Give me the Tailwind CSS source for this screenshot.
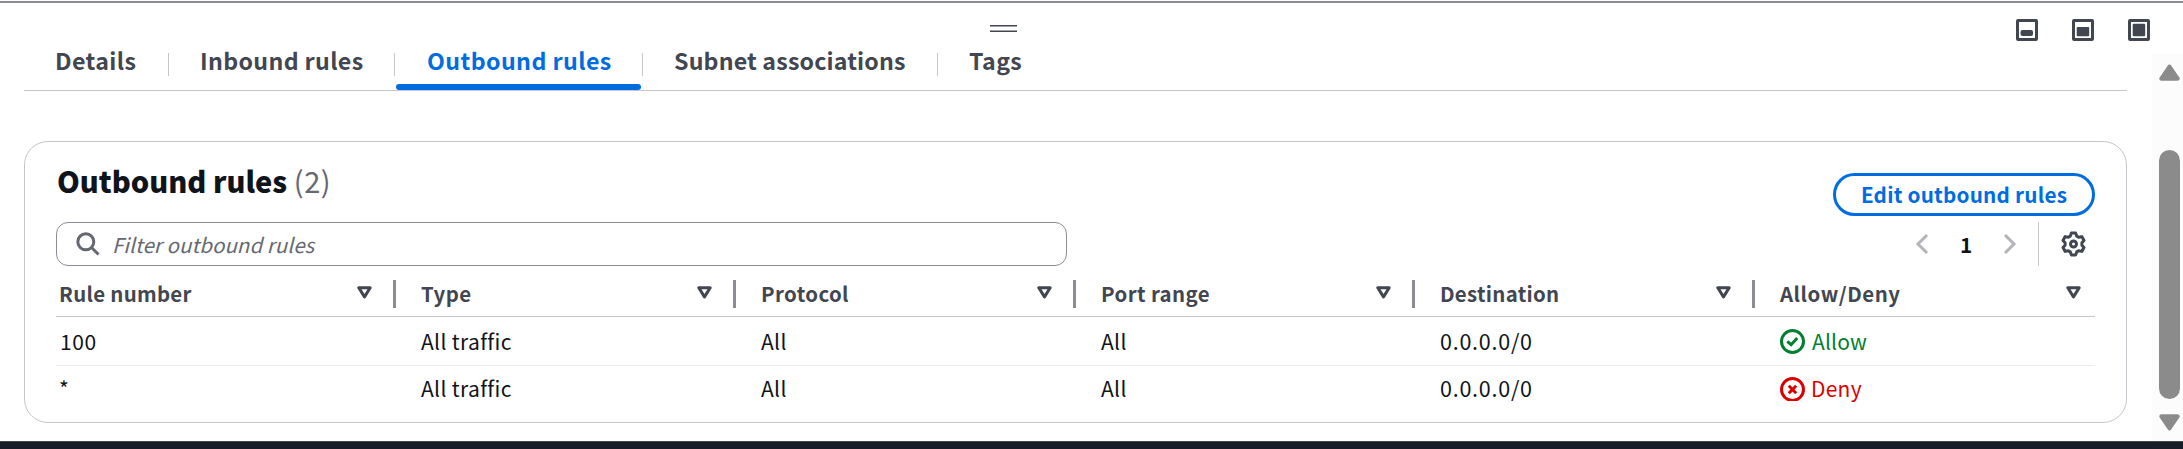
<!DOCTYPE html>
<html lang="en">
<head>
<meta charset="utf-8">
<title>Outbound rules</title>
<script src="https://cdn.jsdelivr.net/npm/@tailwindcss/browser@4"></script>
</head>
<body class="bg-white font-['Noto_Sans_CJK_SC','Noto_Sans',sans-serif] text-[#0f141a]">
<svg class="hidden">
  <symbol id="sort" viewBox="0 0 15 13"><path d="M1.8 1.7h11.4L7.5 10.9z" fill="none" stroke="#424650" stroke-width="3" stroke-linejoin="round"/></symbol>
</svg>
<div class="flex h-[449px] w-[2183px] flex-col overflow-hidden">
  <!-- Split panel handle and size controls -->
  <div class="flex h-[53px] shrink-0 flex-col pt-px">
    <div class="h-[2px] shrink-0 bg-[#8c8c94]"></div>
    <div class="flex h-[50px] pl-[990px] pr-[33px]">
      <svg class="mt-[22px] h-[7px] w-[27px]" viewBox="0 0 27 7" fill="#424650"><path d="M0 0h27v1.5H0zM0 5.5h27V7H0z"/></svg>
      <div class="ml-auto mt-4 flex gap-[34px]">
        <svg class="size-[22px]" viewBox="0 0 22 22"><rect x="1.5" y="1.5" width="19" height="19" rx=".5" fill="none" stroke="#424650" stroke-width="3"/><rect x="4.5" y="11" width="12.5" height="6" rx="2" fill="#424650"/></svg>
        <svg class="size-[22px]" viewBox="0 0 22 22"><rect x="1.5" y="1.5" width="19" height="19" rx=".5" fill="none" stroke="#424650" stroke-width="3"/><rect x="4.7" y="8" width="12.5" height="9.2" rx="1" fill="#424650"/></svg>
        <svg class="size-[22px]" viewBox="0 0 22 22"><rect x="1.5" y="1.5" width="19" height="19" rx=".5" fill="none" stroke="#424650" stroke-width="3"/><rect x="4.7" y="4.7" width="12.5" height="12.5" rx="1.2" fill="#424650"/></svg>
      </div>
    </div>
  </div>

  <div class="flex h-[388px] shrink-0">
    <main class="w-[2152px] pl-6 pr-[25px]">
      <!-- Tabs -->
      <nav class="flex h-[38px] border-b border-[#c6c6cd] text-[23.2px] leading-[15px] font-bold text-[#424650] whitespace-nowrap">
        <div class="w-[144px] pl-[31px] tracking-[0.4px]">Details</div>
        <div class="h-[23px] w-px bg-[#c6c6cd]"></div>
        <div class="w-[225px] pl-[31px] tracking-[0.35px]">Inbound rules</div>
        <div class="h-[23px] w-px bg-[#c6c6cd]"></div>
        <div class="flex w-[247px] flex-col justify-between px-px text-[#006ce0]"><span class="pl-[31px] tracking-[0.42px]">Outbound rules</span><span class="h-[6px] rounded-full bg-[#006ce0]"></span></div>
        <div class="h-[23px] w-px bg-[#c6c6cd]"></div>
        <div class="w-[294px] pl-[31px] tracking-[0.16px]">Subnet associations</div>
        <div class="h-[23px] w-px bg-[#c6c6cd]"></div>
        <div class="pl-[31px] tracking-[0.35px]">Tags</div>
      </nav>

      <!-- Rules container -->
      <section class="mt-[50px] h-[282px] rounded-[24px] border border-[#c6c6cd] px-[31px]">
        <header class="flex h-20 items-start justify-between">
          <h2 class="mt-[18px] ml-px text-[29px] leading-10 font-black whitespace-nowrap">Outbound rules <span class="font-normal tracking-[0.6px] text-[#656871]">(2)</span></h2>
          <button class="mt-[31px] flex h-[43px] w-[262px] items-center justify-center rounded-full border-[3px] border-[#006ce0] pb-[2px] text-[20.7px] leading-6 font-bold tracking-[0.22px] text-[#006ce0]">Edit outbound rules</button>
        </header>
        <div class="flex h-11 items-center">
          <div class="flex h-11 w-[1011px] items-center rounded-xl border border-[#8c8c94] pl-[19px]">
            <svg class="size-6" viewBox="0 0 24 24" fill="none" stroke="#656871" stroke-width="3"><circle cx="9.8" cy="9.8" r="8"/><path d="M15.3 15.3l7.2 7.2"/></svg>
            <span class="ml-[12px] pb-[1px] text-[20.4px] leading-6 tracking-[0.1px] text-[#656871] italic">Filter outbound rules</span>
          </div>
          <div class="ml-auto flex h-11 items-center pr-[9px]">
            <svg class="h-[22px] w-[14px]" viewBox="0 0 14 22" fill="none" stroke="#b4b4bb" stroke-width="3"><path d="M12 2L3 11l9 9"/></svg>
            <span class="w-[74px] pb-[1px] text-center text-[20.7px] leading-6 font-bold">1</span>
            <svg class="h-[22px] w-[14px]" viewBox="0 0 14 22" fill="none" stroke="#b4b4bb" stroke-width="3"><path d="M2 2l9 9-9 9"/></svg>
            <div class="ml-[21px] h-11 w-px bg-[#c6c6cd]"></div>
            <svg class="ml-[22px] h-[26px] w-[25px]" viewBox="-12.5 -13 25 26" fill="none" stroke="#424650" stroke-width="3" stroke-linejoin="round"><path d="M-3.2-7.9L-2.2-10.9H2.2L3.2-7.9 5.2-6.7 8.3-7.4 10.5-3.5 8.4-1.2V1.2L10.5 3.5 8.3 7.4 5.2 6.7 3.2 7.9 2.2 10.9H-2.2L-3.2 7.9-5.2 6.7-8.3 7.4-10.5 3.5-8.4 1.2V-1.2L-10.5-3.5-8.3-7.4-5.2-6.7z"/><circle r="3"/></svg>
          </div>
        </div>

        <!-- Table -->
        <div class="grid h-[51px] grid-cols-[340px_340px_340px_339px_340px_340px] border-b border-[#c6c6cd] pt-[3px] text-[20.4px] leading-6 font-bold tracking-[0.4px] text-[#424650]">
          <div class="flex items-center pl-[3px]"><span class="tracking-[0.3px]">Rule number</span><svg class="ml-auto h-[13px] w-[15px]"><use href="#sort"/></svg><i class="ml-[21px] mt-[3px] h-7 w-[3px] bg-[#8c8c94]"></i></div>
          <div class="flex items-center pl-[25px]"><span>Type</span><svg class="ml-auto h-[13px] w-[15px]"><use href="#sort"/></svg><i class="ml-[21px] mt-[3px] h-7 w-[3px] bg-[#8c8c94]"></i></div>
          <div class="flex items-center pl-[25px]"><span>Protocol</span><svg class="ml-auto h-[13px] w-[15px]"><use href="#sort"/></svg><i class="ml-[21px] mt-[3px] h-7 w-[3px] bg-[#8c8c94]"></i></div>
          <div class="flex items-center pl-[25px]"><span>Port range</span><svg class="ml-auto h-[13px] w-[15px]"><use href="#sort"/></svg><i class="ml-[21px] mt-[3px] h-7 w-[3px] bg-[#8c8c94]"></i></div>
          <div class="flex items-center pl-[25px]"><span class="tracking-[0.3px]">Destination</span><svg class="ml-auto h-[13px] w-[15px]"><use href="#sort"/></svg><i class="ml-[21px] mt-[3px] h-7 w-[3px] bg-[#8c8c94]"></i></div>
          <div class="flex items-center pl-[25px]"><span class="tracking-[0.55px]">Allow/Deny</span><svg class="ml-auto mr-[14px] h-[13px] w-[15px]"><use href="#sort"/></svg></div>
        </div>
        <div class="grid h-[49px] grid-cols-[340px_340px_340px_339px_340px_340px] items-center border-b border-[#ebebf0] text-[21px] leading-6 tracking-[0.35px]">
          <div class="pl-[4px] tracking-[0.6px]">100</div>
          <div class="pl-[25px]">All traffic</div>
          <div class="pl-[25px]">All</div>
          <div class="pl-[25px]">All</div>
          <div class="pl-[25px] text-[21.5px] tracking-[0.75px]">0.0.0.0/0</div>
          <div class="flex items-center pl-[25px] tracking-[0.15px] text-[#00802f]"><svg class="mt-px mr-[7px] size-[25px]" viewBox="0 0 25 25" fill="none" stroke="#00802f" stroke-width="3"><circle cx="12.5" cy="12.5" r="11"/><path d="M7.3 12.3l3.8 3.4L17.3 9"/></svg>Allow</div>
        </div>
        <div class="grid h-[43px] grid-cols-[340px_340px_340px_339px_340px_340px] items-center text-[21px] leading-6 tracking-[0.35px]">
          <div class="pl-[3px]">*</div>
          <div class="pl-[25px]">All traffic</div>
          <div class="pl-[25px]">All</div>
          <div class="pl-[25px]">All</div>
          <div class="pl-[25px] text-[21.5px] tracking-[0.75px]">0.0.0.0/0</div>
          <div class="flex items-center pl-[25px] tracking-[0.25px] text-[#db0000]"><svg class="mt-[3px] mr-[6px] h-6 w-[25px] overflow-hidden" viewBox="0 0 25 24" fill="none" stroke="#db0000" stroke-width="3"><circle cx="12.5" cy="12.5" r="11"/><path d="M8.8 8.8l7.4 7.4M16.2 8.8l-7.4 7.4"/></svg>Deny</div>
        </div>
      </section>
    </main>

    <!-- Scrollbar -->
    <aside class="flex w-[31px] flex-col items-start bg-[#fcfcfc] pt-[11px] pl-[7px]">
      <svg class="h-[17px] w-[21px]" viewBox="0 0 21 17"><path d="M10.5 2.5L18.7 14.7H2.3z" fill="#8b8b8b" stroke="#8b8b8b" stroke-width="4" stroke-linejoin="round"/></svg>
      <div class="mt-[69px] h-[249px] w-[21px] rounded-full bg-[#8b8b8b]"></div>
      <svg class="mt-[15px] h-[17px] w-[21px]" viewBox="0 0 21 17"><path d="M10.5 14.5L18.7 2.3H2.3z" fill="#8b8b8b" stroke="#8b8b8b" stroke-width="4" stroke-linejoin="round"/></svg>
    </aside>
  </div>
  <footer class="h-2 border-t border-[#424650] bg-[#161d26]"></footer>
</div>
</body>
</html>
